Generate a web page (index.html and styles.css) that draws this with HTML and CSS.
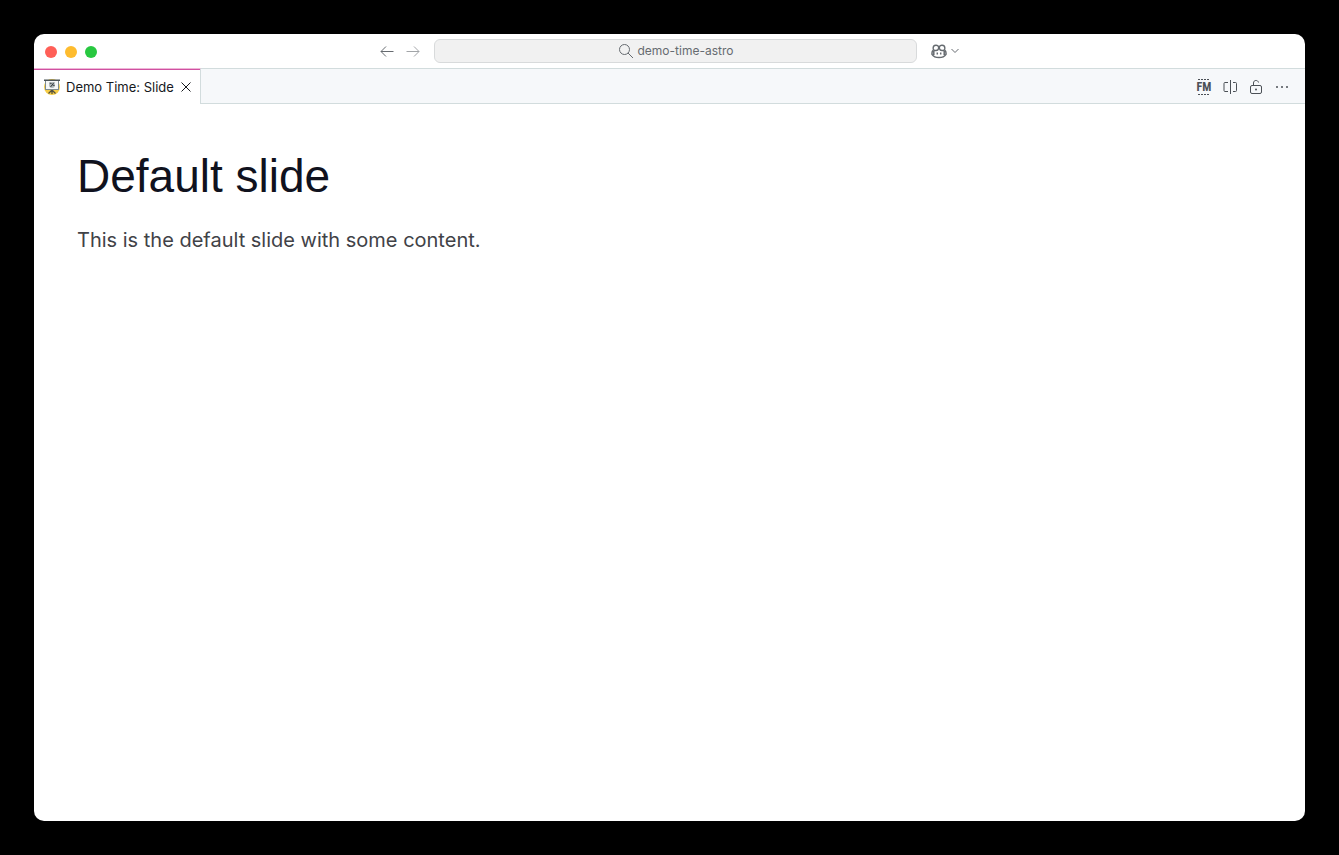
FILE: index.html
```html
<!DOCTYPE html>
<html lang="en">
<head>
<meta charset="utf-8">
<meta name="viewport" content="width=device-width, initial-scale=1">
<title>Demo Time: Slide</title>
<link rel="stylesheet" href="styles.css">
</head>
<body>
<div class="window">
  <header class="titlebar">
    <div class="lights">
      <button class="light close" aria-label="Close window"></button>
      <button class="light minimize" aria-label="Minimize window"></button>
      <button class="light maximize" aria-label="Maximize window"></button>
    </div>
    <nav class="history" aria-label="History">
      <button class="icon-button" aria-label="Go back">
        <svg class="icon" viewBox="0 0 16 16"><path d="M14.500 8.500h-12.500M7 3.500L2 8.500l5 5"/></svg>
      </button>
      <button class="icon-button muted" aria-label="Go forward">
        <svg class="icon" viewBox="0 0 16 16"><path d="M1.500 8.500h12.500M9 3.500l5 5-5 5"/></svg>
      </button>
    </nav>
    <button class="command-center">
      <svg class="icon" viewBox="0 0 16 16"><circle cx="6.500" cy="6.500" r="5"/><path d="M10 10l5 5"/></svg>
      <span>demo-time-astro</span>
    </button>
    <div class="assistant">
      <button class="assistant-button" aria-label="Copilot">
        <svg class="icon copilot" viewBox="0 0 16 16"><path d="M2.200 7.300C1.200 8 1 8.800 1 10v1.300C2.300 13.300 5 14.500 8 14.500s5.700-1.200 7-3.200V10c0-1.200-.2-2-1.200-2.700M2.800 7.400V12M13.200 7.400V12M6.300 9.600v2M9.700 9.600v2"/><path d="M7.400 3.300C6.700 2 3.700 1.900 2.800 3c-.9 1.200-.7 3.300.1 4.100.9.800 3.300.6 4.100-.3.700-.8.800-2.500.4-3.500zM8.600 3.300c.7-1.300 3.700-1.400 4.600-.3.900 1.200.7 3.300-.1 4.100-.9.800-3.300.6-4.100-.3-.7-.8-.8-2.500-.4-3.500zM7.300 4.200h1.400"/></svg>
        <svg class="chevron" viewBox="0 0 8 8"><path d="M.5 2L4 5.500 7.500 2"/></svg>
      </button>
    </div>
  </header>
  <div class="tabbar">
    <div class="tab">
      <svg class="tab-icon" viewBox="0 0 16 16">
        <circle cx="8" cy="8" r="8" fill="#f6cd45"/>
        <path d="M8 10v5M8 11l-3.500 3.500M8 11l3.500 3.500" stroke="#55523f" stroke-width="1.300"/>
        <rect x="1.500" y="1.500" width="13" height="9" fill="#f5f7f7" stroke="#7d8a8c"/>
        <path d="M0 1.200h16" stroke="#4b5457" stroke-width="1.400"/>
        <circle cx="8" cy="6" r="3" fill="#aeb7b9"/>
        <path d="M5.500 4l2 .5M10 3.500L6.500 8M8.500 6l2 .5" stroke="#343b3e"/>
      </svg>
      <span>Demo Time: Slide</span>
      <button class="tab-close" aria-label="Close tab">
        <svg class="icon" viewBox="0 0 16 16"><path d="M3.500 3.500l9 9M12.500 3.500l-9 9"/></svg>
      </button>
    </div>
    <div class="actions">
      <button class="icon-button" aria-label="Front Matter">
        <svg class="icon" viewBox="0 0 16 16"><path d="M2 .5h12M2 15.500h12" stroke-dasharray="2 1"/><text class="fm" x="8" y="12" text-anchor="middle">FM</text></svg>
      </button>
      <button class="icon-button" aria-label="Split editor">
        <svg class="icon" viewBox="0 0 16 16"><path d="M8.500 1v14M6 3.500H3a1 1 0 0 0-1 1v7a1 1 0 0 0 1 1h3M11 3.500h2.500a1 1 0 0 1 1 1v7a1 1 0 0 1-1 1H11"/></svg>
      </button>
      <button class="icon-button" aria-label="Unlock group">
        <svg class="icon" viewBox="0 0 16 16"><rect x="2.500" y="6.500" width="11" height="8" rx="1.500"/><path d="M5.500 6.500V4c0-3.300 4.500-3.300 5-.5"/><circle class="dot" cx="8" cy="10.500" r="1"/></svg>
      </button>
      <button class="icon-button" aria-label="More actions">
        <svg class="icon" viewBox="0 0 16 16"><g class="dot"><circle cx="3" cy="8" r="1"/><circle cx="8" cy="8" r="1"/><circle cx="13" cy="8" r="1"/></g></svg>
      </button>
    </div>
  </div>
  <main class="slide">
    <h1>Default slide</h1>
    <p>This is the default slide with some content.</p>
  </main>
</div>
</body>
</html>
```
FILE: styles.css
```css
* { box-sizing: border-box; }

body {
  display: flex;
  min-height: 100vh;
  margin: 0;
  padding: 34px;
  background: #000;
  font-family: Inter, "Liberation Sans", sans-serif;
}

button {
  padding: 0;
  border: 0;
  background: none;
  color: inherit;
  font: inherit;
}

.window {
  display: flex;
  flex: 1;
  flex-direction: column;
  overflow: hidden;
  border-radius: 10px;
  background: #fff;
}

.titlebar {
  display: flex;
  align-items: center;
  height: 35px;
  border-bottom: 1px solid #d2dcdd;
  color: #666b70;
}

.titlebar::after {
  flex: 1;
  content: "";
}

.lights {
  display: flex;
  flex: 1;
  gap: 8px;
  padding-top: 2px;
}

.light {
  width: 12px;
  height: 12px;
  border-radius: 50%;
}

.close {
  margin-left: 11px;
  background: #ff5f57;
}

.minimize { background: #febc2e; }
.maximize { background: #28c840; }

.history {
  display: flex;
  gap: 4px;
  margin-right: 10px;
}

.icon-button {
  display: grid;
  place-items: center;
  width: 22px;
  height: 22px;
}

.muted { opacity: 0.6; }

.icon,
.chevron {
  display: block;
  width: 16px;
  height: 16px;
  fill: none;
  stroke: currentColor;
}

.command-center {
  display: flex;
  align-items: center;
  justify-content: center;
  gap: 4px;
  width: 38%;
  height: 24px;
  padding-bottom: 1px;
  border: 1px solid #d8dadb;
  border-radius: 6px;
  background: #f1f1f1;
  font-size: 12px;
}

.assistant {
  padding: 0 4px 0 14px;
}

.assistant-button {
  display: flex;
  align-items: center;
  gap: 4px;
}

.copilot {
  stroke-width: 1.5;
}

.chevron {
  width: 8px;
  height: 8px;
}

.tabbar {
  display: flex;
  height: 35px;
  background: #f6f8fa;
  color: #4b5056;
}

.tab {
  display: flex;
  align-items: center;
  gap: 6px;
  margin-top: -1px;
  padding: 0 6px 0 10px;
  border-top: 1px solid #eeb5d8;
  border-right: 1px solid #d2dcdd;
  background: #fff;
  box-shadow: inset 0 1px #d050a0;
  color: #16191d;
  font-size: 13px;
}

.tab-icon {
  width: 16px;
  height: 16px;
  fill: none;
}

.tab-close {
  margin-left: -2px;
}

.actions {
  display: flex;
  flex: 1;
  align-items: center;
  justify-content: flex-end;
  gap: 4px;
  padding: 2px 12px 0 0;
  border-bottom: 1px solid #d2dcdd;
}

.fm {
  fill: currentColor;
  stroke: none;
  font-family: "Roboto Condensed", "DejaVu Sans Condensed", sans-serif;
  font-size: 12px;
  font-weight: 700;
}

.dot {
  fill: currentColor;
  stroke: none;
}

.slide {
  flex: 1;
  padding: 42px 43px;
}

h1 {
  margin: 0 0 20px;
  color: #10121e;
  font-family: "Liberation Sans", sans-serif;
  font-size: 46px;
  font-weight: 400;
  line-height: 60px;
}

p {
  margin: 0;
  color: #414247;
  font-size: 20px;
  line-height: 28px;
}
```
